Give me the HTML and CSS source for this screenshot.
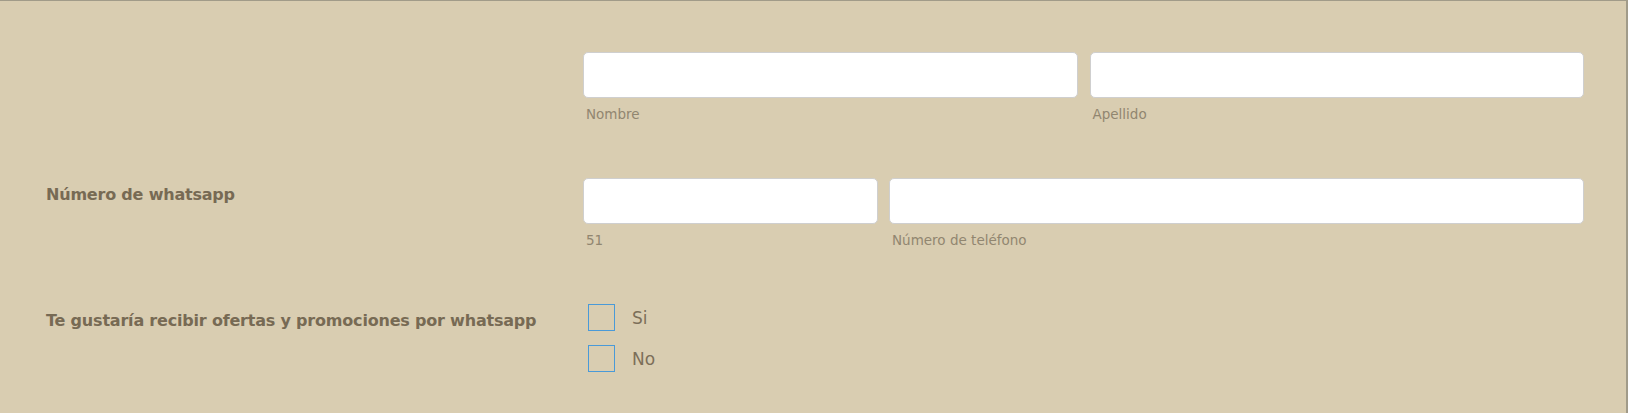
FILE: index.html
```html
<!DOCTYPE html>
<html lang="es">

    <head>
        <meta charset="UTF-8">
        <meta name="viewport" content="width=device-width, initial-scale=1.0">
        <title>Formulario de contacto</title>
        <link rel="stylesheet" href="styles.css">
    </head>

    <body>
        <form class="form">
            <!-- Nombre completo -->
            <div class="row">
                <div class="label"></div>
                <div class="fields halves">
                    <div class="field">
                        <input type="text" class="input">
                        <span class="sublabel">Nombre</span>
                    </div>
                    <div class="field">
                        <input type="text" class="input">
                        <span class="sublabel">Apellido</span>
                    </div>
                </div>
            </div>

            <!-- Telefono -->
            <div class="row">
                <div class="label">Número de whatsapp</div>
                <div class="fields phone">
                    <div class="field">
                        <input type="text" class="input">
                        <span class="sublabel">51</span>
                    </div>
                    <div class="field">
                        <input type="text" class="input">
                        <span class="sublabel">Número de teléfono</span>
                    </div>
                </div>
            </div>

            <!-- Ofertas -->
            <div class="row">
                <div class="label">Te gustaría recibir ofertas y promociones por whatsapp</div>
                <div class="options">
                    <label class="option">
                        <span class="box"></span>
                        <span>Si</span>
                    </label>
                    <label class="option">
                        <span class="box"></span>
                        <span>No</span>
                    </label>
                </div>
            </div>
        </form>
    </body>

</html>
```

FILE: styles.css
```css
body {
    margin: 0;
    background-color: #d9cdb1;
    font-family: "DejaVu Sans", "Noto Sans", sans-serif;
}

.form {
    box-sizing: border-box;
    width: 1628px;
    height: 413px;
    padding: 51px 0 0 46px;
    border-top: 1px solid #a19b89;
    border-right: 2px solid #a19b89;
    background-color: #d9cdb1;
}

.row {
    display: flex;
    margin-bottom: 53px;
}

.label {
    flex: 0 0 537px;
    padding-top: 5px;
    font-size: 16px;
    line-height: 24px;
    font-weight: 600;
    letter-spacing: -0.2px;
    color: #776a54;
}

.fields {
    display: grid;
    width: 1001px;
}

.halves {
    grid-template-columns: 1fr 1fr;
    column-gap: 12px;
}

.phone {
    grid-template-columns: 295px 1fr;
    column-gap: 11px;
}

.field {
    display: flex;
    flex-direction: column;
}

.input {
    box-sizing: border-box;
    height: 46px;
    margin: 0;
    border: 1px solid #cfcfcf;
    border-radius: 5px;
    background-color: #ffffff;
}

.sublabel {
    margin-top: 6px;
    padding-left: 3px;
    font-size: 13.5px;
    line-height: 21px;
    color: #918670;
}

.options {
    display: flex;
    flex-direction: column;
    gap: 14px;
    padding-left: 5px;
}

.option {
    display: flex;
    align-items: center;
    gap: 17px;
    font-size: 17px;
    color: #7c6f59;
}

.box {
    box-sizing: border-box;
    width: 27px;
    height: 27px;
    border: 1px solid #4a9ad8;
}
```
